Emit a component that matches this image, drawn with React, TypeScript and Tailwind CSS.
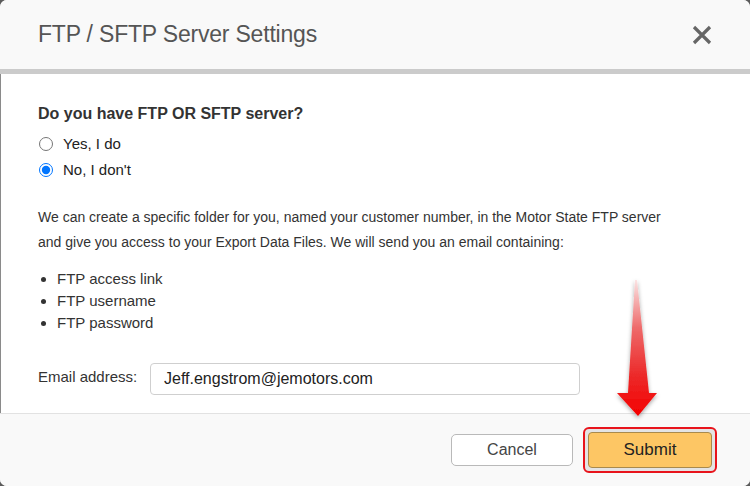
import React from 'react';

const font = { fontFamily: '"Liberation Sans", Arial, sans-serif' };

function CloseIcon() {
  return (
    <svg width="22" height="22" viewBox="0 0 22 22" className="text-[#666]">
      <path d="M3 3 L19 19 M19 3 L3 19" stroke="currentColor" strokeWidth="3.2" strokeLinecap="butt" />
    </svg>
  );
}

function Arrow() {
  return (
    <svg
      className="absolute left-[610px] top-[275px] pointer-events-none"
      width="60"
      height="150"
      viewBox="0 0 60 150"
    >
      <defs>
        <linearGradient id="arrowFill" x1="0" y1="0" x2="0" y2="1">
          <stop offset="0" stopColor="#fbe3e3" />
          <stop offset="0.35" stopColor="#ee6b6b" />
          <stop offset="0.7" stopColor="#ec2a2a" />
          <stop offset="1" stopColor="#f40000" />
        </linearGradient>
        <filter id="arrowShadow" x="-30%" y="-10%" width="160%" height="130%">
          <feDropShadow dx="0" dy="2" stdDeviation="2" floodColor="#000" floodOpacity="0.35" />
        </filter>
      </defs>
      <path
        d="M25 5 L27 5 L39 118 L47 118 L28 141 L7 118 L18 118 Z"
        fill="url(#arrowFill)"
        filter="url(#arrowShadow)"
      />
    </svg>
  );
}

export default function App() {
  return (
    <div className="relative w-[750px] h-[486px] bg-[#5c5c5c] overflow-hidden" style={font}>
      <div className="w-full h-full rounded-[7px] bg-white flex flex-col overflow-hidden">
        {/* Header */}
        <div className="h-[69px] bg-[#f9f9f9] flex items-center justify-between pl-[38px] pr-[37px] shrink-0">
          <h1 className="text-[23px] text-[#555] leading-none tracking-[-0.2px]">FTP / SFTP Server Settings</h1>
          <CloseIcon />
        </div>
        <div className="h-[5px] bg-[#cbcbcb] shrink-0" />

        {/* Body */}
        <div className="flex-1 border-l border-[#8a8a8a] pl-[37px] pt-[30px] text-[#333]">
          <p className="text-[16px] font-bold leading-[20px] text-[#333]">Do you have FTP OR SFTP server?</p>

          <div className="mt-[7px] flex flex-col">
            <label className="flex items-center h-[26px] text-[15px] text-[#222]">
              <input type="radio" name="ftp" className="w-[14px] h-[14px] m-0 ml-[1px] mr-[10px]" />
              Yes, I do
            </label>
            <label className="flex items-center h-[26px] text-[15px] text-[#222]">
              <input type="radio" name="ftp" defaultChecked className="w-[14px] h-[14px] m-0 ml-[1px] mr-[10px] accent-[#0075ff]" />
              No, I don't
            </label>
          </div>

          <p className="mt-[22px] text-[14px] leading-[25px] text-[#333] whitespace-nowrap">
            We can create a specific folder for you, named your customer number, in the Motor State FTP server
            <br />
            and give you access to your Export Data Files. We will send you an email containing:
          </p>

          <ul className="mt-[13px] list-disc pl-[19px] text-[15px] leading-[22px] text-[#333]">
            <li>FTP access link</li>
            <li>FTP username</li>
            <li>FTP password</li>
          </ul>

          <div className="mt-[29px] flex items-start">
            <label className="w-[112px] pt-[3px] text-[15px] text-[#333]">Email address:</label>
            <input
              type="text"
              defaultValue="Jeff.engstrom@jemotors.com"
              className="w-[430px] h-[32px] border border-[#cfcfcf] rounded-[4px] px-[13px] text-[16px] text-[#222] outline-none"
              style={font}
            />
          </div>
        </div>

        {/* Footer */}
        <div className="h-[73px] shrink-0 border-t border-[#e2e2e2] bg-[#f9f9f9] flex items-center justify-end pr-[33px] gap-[10px]">
          <button className="w-[122px] h-[32px] bg-white border border-[#b9b9b9] rounded-[5px] text-[16px] text-[#444]" style={font}>
            Cancel
          </button>
          <div className="border-2 border-[#e8141c] rounded-[6px] p-[3px] bg-[#e4e4e4]">
            <button className="w-[124px] h-[36px] bg-[#fdc664] border border-[#a98a4c] rounded-[4px] text-[17px] text-[#222] block" style={font}>
              Submit
            </button>
          </div>
        </div>
      </div>
      <Arrow />
    </div>
  );
}
